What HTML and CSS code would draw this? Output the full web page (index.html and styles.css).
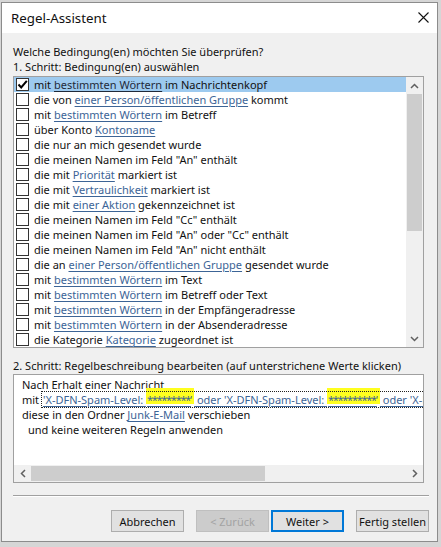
FILE: index.html
```html
<!DOCTYPE html>
<html lang="de">
<head>
<meta charset="utf-8">
<title>Regel-Assistent</title>
<link rel="stylesheet" href="styles.css">
</head>
<body>
<div class="window">
  <div class="titlebar">
    <span class="title">Regel-Assistent</span>
    <svg class="close" width="11" height="11" viewBox="0 0 11 11"><path d="M0.5 0.5 L10.5 10.5 M10.5 0.5 L0.5 10.5" stroke="#111" stroke-width="1.1" fill="none"/></svg>
  </div>
  <div class="content">
    <div class="line">Welche Bedingung(en) möchten Sie überprüfen?</div>
    <div class="line">1. Schritt: Bedingung(en) auswählen</div>
    <div class="list">
      <div class="rows">
        <div class="row selected"><span class="cb checked"><svg width="11" height="11" viewBox="0 0 11 11"><path d="M1.5 5.5 L4.2 8.5 L9.8 1.8" stroke="#000" stroke-width="2" fill="none"/></svg></span><span>mit <span class="lnk">bestimmten Wörtern</span> im Nachrichtenkopf</span></div>
        <div class="row"><span class="cb"></span><span>die von <span class="lnk">einer Person/öffentlichen Gruppe</span> kommt</span></div>
        <div class="row"><span class="cb"></span><span>mit <span class="lnk">bestimmten Wörtern</span> im Betreff</span></div>
        <div class="row"><span class="cb"></span><span>über Konto <span class="lnk">Kontoname</span></span></div>
        <div class="row"><span class="cb"></span><span>die nur an mich gesendet wurde</span></div>
        <div class="row"><span class="cb"></span><span>die meinen Namen im Feld "An" enthält</span></div>
        <div class="row"><span class="cb"></span><span>die mit <span class="lnk">Priorität</span> markiert ist</span></div>
        <div class="row"><span class="cb"></span><span>die mit <span class="lnk">Vertraulichkeit</span> markiert ist</span></div>
        <div class="row"><span class="cb"></span><span>die mit <span class="lnk">einer Aktion</span> gekennzeichnet ist</span></div>
        <div class="row"><span class="cb"></span><span>die meinen Namen im Feld "Cc" enthält</span></div>
        <div class="row"><span class="cb"></span><span>die meinen Namen im Feld "An" oder "Cc" enthält</span></div>
        <div class="row"><span class="cb"></span><span>die meinen Namen im Feld "An" nicht enthält</span></div>
        <div class="row"><span class="cb"></span><span>die an <span class="lnk">einer Person/öffentlichen Gruppe</span> gesendet wurde</span></div>
        <div class="row"><span class="cb"></span><span>mit <span class="lnk">bestimmten Wörtern</span> im Text</span></div>
        <div class="row"><span class="cb"></span><span>mit <span class="lnk">bestimmten Wörtern</span> im Betreff oder Text</span></div>
        <div class="row"><span class="cb"></span><span>mit <span class="lnk">bestimmten Wörtern</span> in der Empfängeradresse</span></div>
        <div class="row"><span class="cb"></span><span>mit <span class="lnk">bestimmten Wörtern</span> in der Absenderadresse</span></div>
        <div class="row"><span class="cb"></span><span>die Kategorie <span class="lnk">Kategorie</span> zugeordnet ist</span></div>
      </div>
      <div class="vscroll">
        <div class="sbtn"><svg width="9" height="6" viewBox="0 0 9 6"><path d="M1 5 L4.5 1.5 L8 5" stroke="#606060" stroke-width="1.5" fill="none"/></svg></div>
        <div class="vtrack"><div class="vthumb"></div></div>
        <div class="sbtn"><svg width="9" height="6" viewBox="0 0 9 6"><path d="M1 1 L4.5 4.5 L8 1" stroke="#606060" stroke-width="1.5" fill="none"/></svg></div>
      </div>
    </div>
    <div class="line step2">2. Schritt: Regelbeschreibung bearbeiten (auf unterstrichene Werte klicken)</div>
    <div class="desc">
      <div class="desc-text">
        <div class="line">Nach Erhalt einer Nachricht</div>
        <div class="line">mit <span class="focus"><span class="lnk">'X-DFN-Spam-Level: <span class="hl">*********'</span> oder 'X-DFN-Spam-Level: <span class="hl">**********'</span> oder 'X-DF</span></span></div>
        <div class="line">diese in den Ordner <span class="lnk">Junk-E-Mail</span> verschieben</div>
        <div class="line indent">und keine weiteren Regeln anwenden</div>
      </div>
      <div class="hscroll">
        <div class="hbtn"><svg width="6" height="9" viewBox="0 0 6 9"><path d="M5 1 L1.5 4.5 L5 8" stroke="#606060" stroke-width="1.5" fill="none"/></svg></div>
        <div class="htrack"><div class="hthumb"></div></div>
        <div class="hbtn"><svg width="6" height="9" viewBox="0 0 6 9"><path d="M1 1 L4.5 4.5 L1 8" stroke="#606060" stroke-width="1.5" fill="none"/></svg></div>
      </div>
    </div>
    <div class="separator"></div>
    <div class="buttons">
      <button class="btn">Abbrechen</button>
      <button class="btn disabled">&lt; Zurück</button>
      <button class="btn default">Weiter &gt;</button>
      <button class="btn">Fertig stellen</button>
    </div>
  </div>
</div>
</body>
</html>
```
FILE: styles.css
```css
html, body {
  margin: 0;
  padding: 0;
}
body {
  background: #d6d6d6;
  font-family: "Segoe UI", "Noto Sans", "Open Sans", sans-serif;
  font-size: 11px;
  color: #111;
  width: 441px;
  height: 547px;
  overflow: hidden;
}
.window {
  margin: 2px 0 0 1px;
  width: 437px;
  height: 540px;
  box-sizing: border-box;
  border: 1px solid #8c8c8c;
  background: #f0f0f0;
  display: flex;
  flex-direction: column;
}
.titlebar {
  height: 30px;
  background: #fff;
  display: flex;
  align-items: center;
  justify-content: space-between;
  padding: 0 8px 0 9px;
  flex: none;
}
.title {
  font-size: 13.3px;
  color: #111;
}
.close {
  display: block;
  margin-top: -2px;
}
.content {
  flex: 1;
  display: flex;
  flex-direction: column;
  padding: 11px 8px 0 11px;
}
.line {
  height: 15px;
  line-height: 15px;
  white-space: nowrap;
}
.list {
  margin-top: 2px;
  width: 411px;
  height: 272px;
  box-sizing: border-box;
  border: 1px solid #a0a0a0;
  background: #fff;
  display: flex;
}
.rows {
  flex: 1;
  overflow: hidden;
}
.row {
  height: 15px;
  line-height: 15px;
  display: flex;
  align-items: center;
  white-space: nowrap;
}
.row.selected {
  background: #9dcaef;
}
.cb {
  width: 13px;
  height: 13px;
  box-sizing: border-box;
  border: 1px solid #333;
  background: #fff;
  margin: 0 5px 0 2px;
  flex: none;
  display: flex;
  align-items: center;
  justify-content: center;
}
.lnk {
  color: #3c6496;
  text-decoration: underline;
  text-underline-offset: 2px;
}
.selected .lnk {
  color: #1f2a3a;
}
.vscroll {
  width: 17px;
  background: #f0f0f0;
  display: flex;
  flex-direction: column;
}
.sbtn {
  height: 17px;
  display: flex;
  align-items: center;
  justify-content: center;
  flex: none;
}
.vtrack {
  flex: 1;
  padding: 0 1px;
}
.vthumb {
  height: 137px;
  background: #cdcdcd;
}
.step2 {
  margin-top: 10px;
}
.desc {
  margin-top: 1px;
  width: 411px;
  height: 109px;
  box-sizing: border-box;
  border: 1px solid #a0a0a0;
  background: #fff;
  display: flex;
  flex-direction: column;
}
.desc-text {
  flex: 1;
  overflow: hidden;
  padding: 2px 0 0 8px;
}
.indent {
  padding-left: 6px;
}
.focus {
  outline: 1px dotted #222;
  outline-offset: 0;
  padding: 0 20px 0 1px;
}
.hl {
  background: linear-gradient(#ffff1e, #ffff1e) top left / 100% 16px no-repeat;
  padding: 4px 3px 0 1px;
  letter-spacing: -1.3px;
}
.hscroll {
  height: 17px;
  background: #f0f0f0;
  display: flex;
  flex: none;
}
.hbtn {
  width: 17px;
  display: flex;
  align-items: center;
  justify-content: center;
  flex: none;
}
.htrack {
  flex: 1;
  padding: 1px 0;
}
.hthumb {
  width: 234px;
  height: 100%;
  background: #cdcdcd;
}
.separator {
  margin-top: 12px;
  height: 1px;
  background: #a0a0a0;
  border-bottom: 1px solid #fff;
}
.buttons {
  margin-top: 13px;
  display: flex;
  justify-content: flex-end;
}
.btn {
  width: 73px;
  height: 22px;
  box-sizing: border-box;
  border: 1px solid #adadad;
  background: #e1e1e1;
  font-family: inherit;
  font-size: 11px;
  color: #111;
  padding: 0;
  margin-left: 12px;
  white-space: nowrap;
}
.btn.disabled {
  background: #cccccc;
  border-color: #bfbfbf;
  color: #a3a3a3;
}
.btn.default {
  margin-left: 2px;
  border: 2px solid #0078d7;
}
```
